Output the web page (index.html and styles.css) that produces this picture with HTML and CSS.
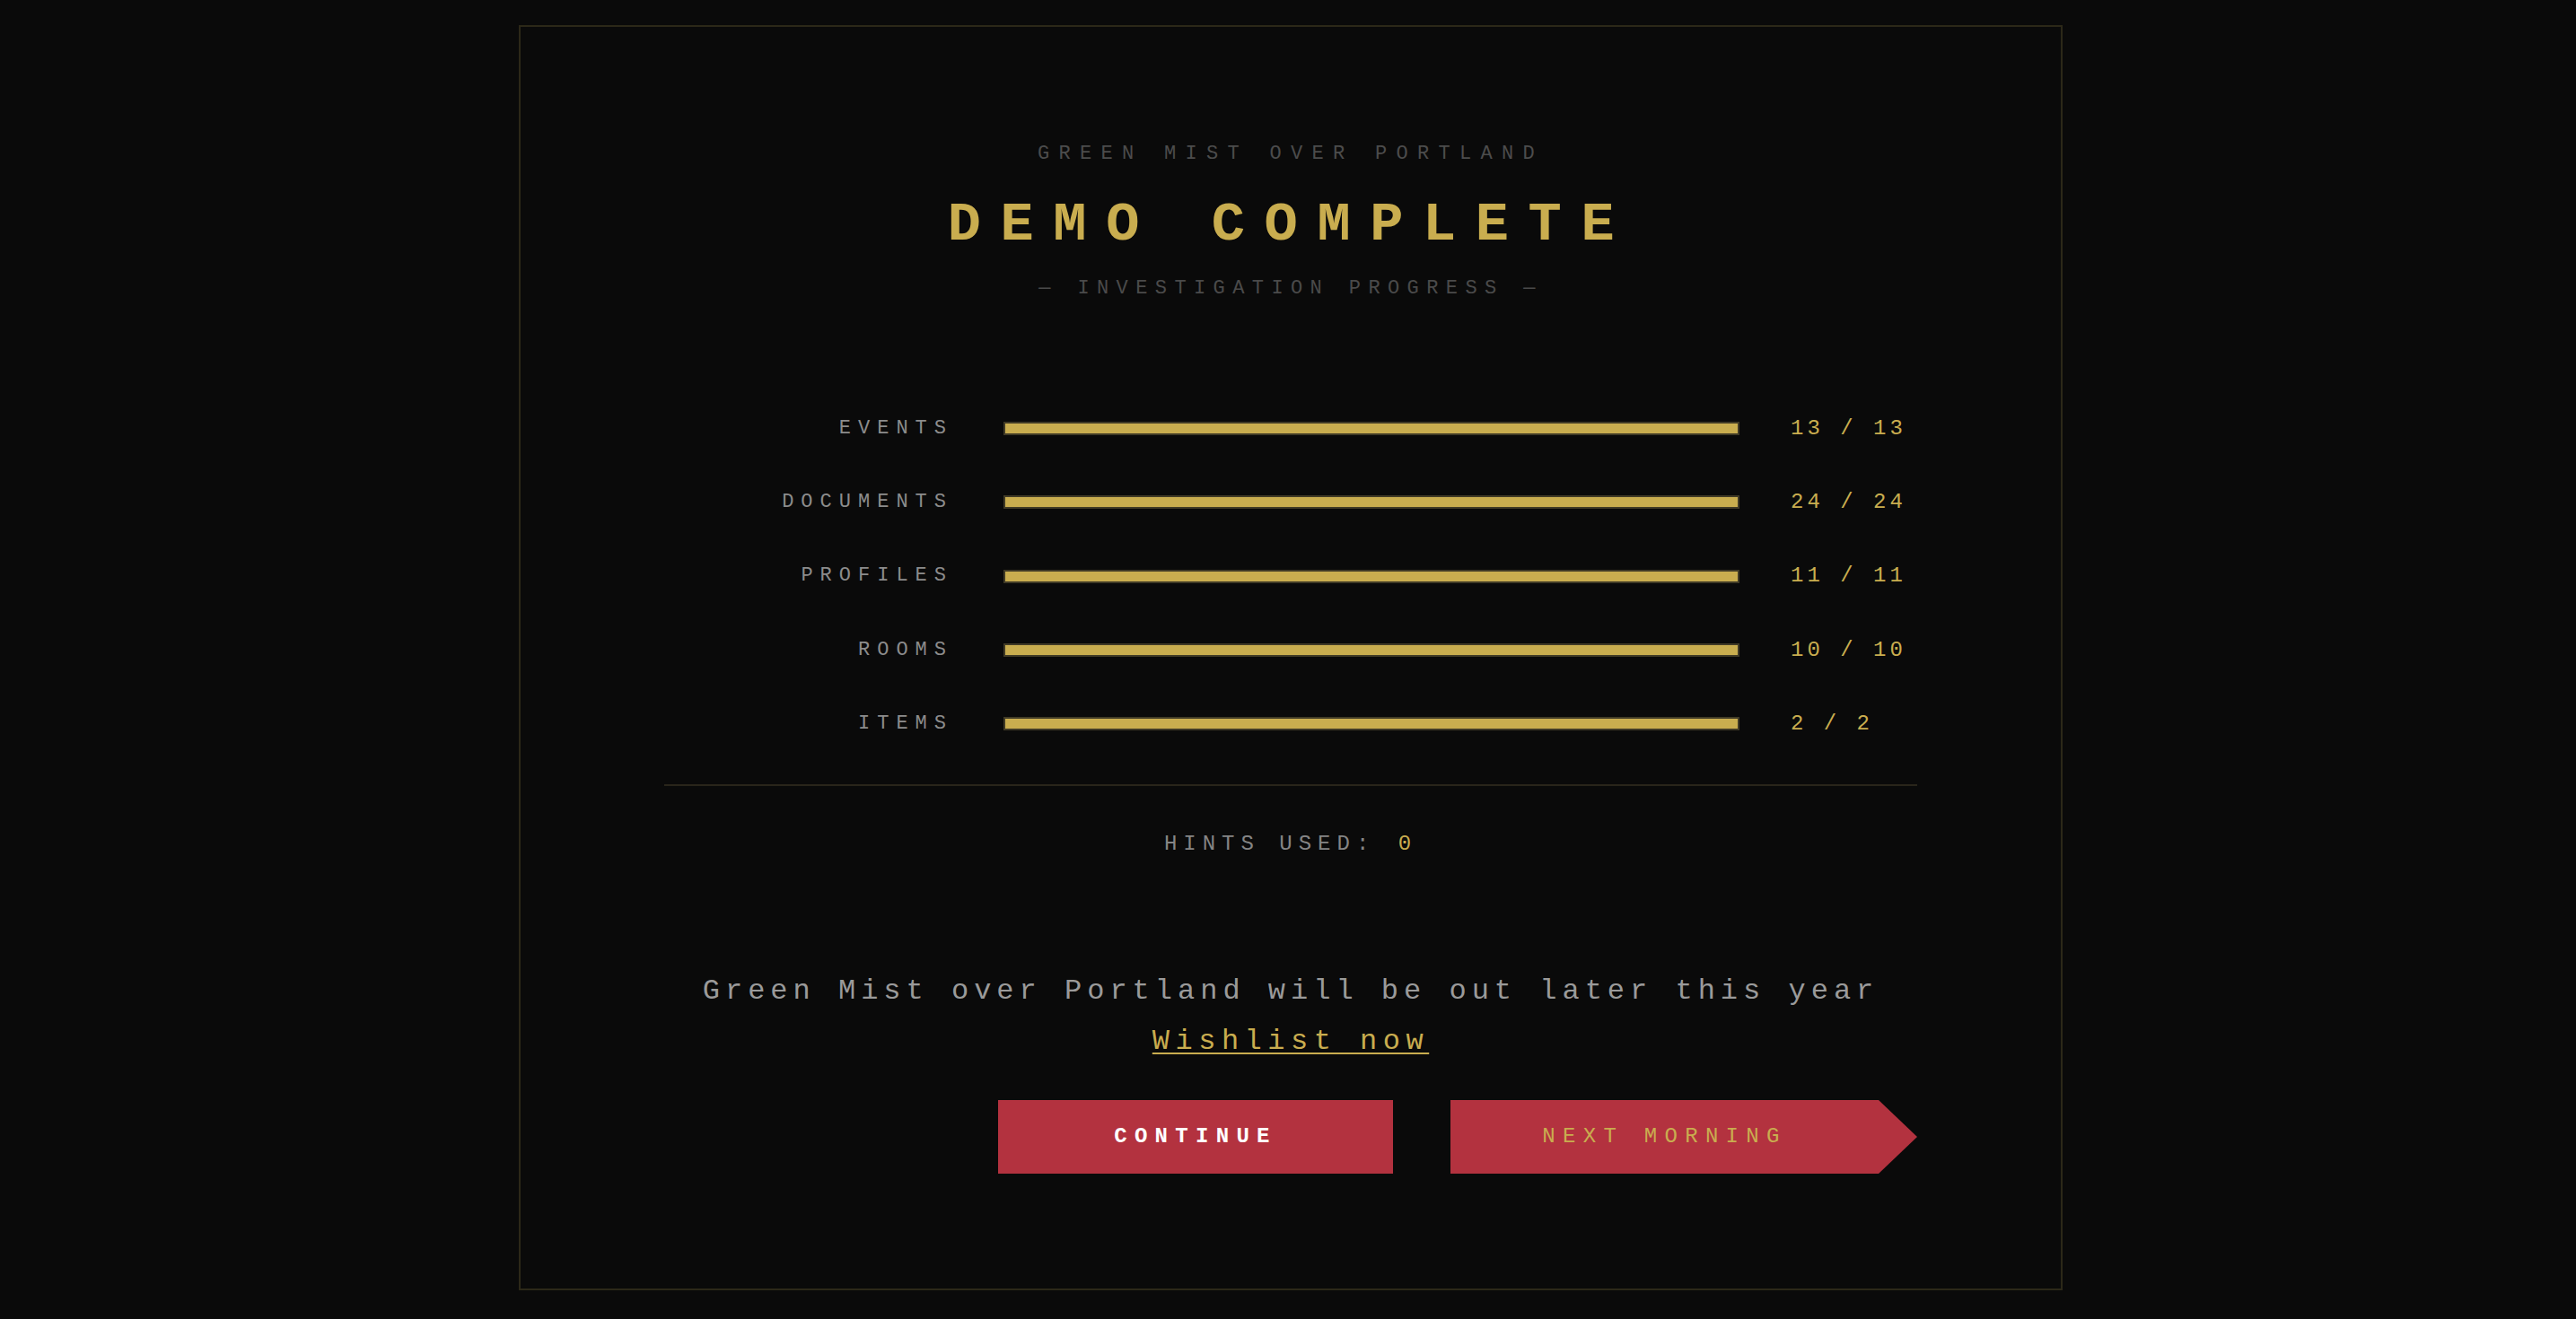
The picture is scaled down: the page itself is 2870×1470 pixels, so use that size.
FILE: index.html
```html
<!DOCTYPE html>
<html lang="en">
<head>
  <meta charset="UTF-8">
  <meta name="viewport" content="width=device-width, initial-scale=1.0">
  <link rel="stylesheet" href="styles.css">
  <title>Demo Complete</title>
</head>
<body>
  <div class="frame">
    <p class="kicker">GREEN MIST OVER PORTLAND</p>
    <h1 class="title">DEMO COMPLETE</h1>
    <p class="subtitle">— INVESTIGATION PROGRESS —</p>

    <div class="inner">
      <div class="stats">
        <div class="stat">
          <span class="stat-label">EVENTS</span>
          <div class="bar"><div class="bar-fill" style="width: 100%"></div></div>
          <span class="stat-value">13 / 13</span>
        </div>
        <div class="stat">
          <span class="stat-label">DOCUMENTS</span>
          <div class="bar"><div class="bar-fill" style="width: 100%"></div></div>
          <span class="stat-value">24 / 24</span>
        </div>
        <div class="stat">
          <span class="stat-label">PROFILES</span>
          <div class="bar"><div class="bar-fill" style="width: 100%"></div></div>
          <span class="stat-value">11 / 11</span>
        </div>
        <div class="stat">
          <span class="stat-label">ROOMS</span>
          <div class="bar"><div class="bar-fill" style="width: 100%"></div></div>
          <span class="stat-value">10 / 10</span>
        </div>
        <div class="stat">
          <span class="stat-label">ITEMS</span>
          <div class="bar"><div class="bar-fill" style="width: 100%"></div></div>
          <span class="stat-value">2 / 2</span>
        </div>
      </div>

      <hr class="divider">

      <p class="hints">HINTS USED: <span class="hints-count">0</span></p>

      <p class="promo">Green Mist over Portland will be out later this year<br><a class="wishlist" href="#">Wishlist now</a></p>

      <div class="actions">
        <button class="btn btn-continue">CONTINUE</button>
        <button class="btn btn-next">NEXT MORNING</button>
      </div>
    </div>
  </div>
</body>
</html>
```

FILE: styles.css
```css
body {
  margin: 0;
  background-color: #0a0a0a;
  font-family: "Liberation Mono", "Courier New", monospace;
}

.frame {
  width: 1720px;
  box-sizing: border-box;
  margin: 28px 0 30px calc(50% - 857px);
  padding: 127px 0 128px;
  border: 2px solid #2c2818;
  text-align: center;
}

.kicker {
  margin: 0;
  font-size: 22px;
  line-height: 30px;
  letter-spacing: 10.3px;
  color: #4c4c4c;
}

.title {
  margin: 23.5px 0 0;
  font-size: 62px;
  line-height: 80px;
  font-weight: bold;
  letter-spacing: 21.6px;
  color: #c9ad4f;
}

.subtitle {
  margin: 16px 0 0;
  font-size: 22px;
  line-height: 30px;
  letter-spacing: 8.4px;
  color: #4a4a4a;
}

.inner {
  width: 1396px;
  margin: 0 auto;
}

/* progress rows */
.stats {
  margin-top: 100px;
}

.stat {
  display: grid;
  grid-template-columns: 322px 820px 1fr;
  column-gap: 56px;
  align-items: center;
  height: 82.3px;
}

.stat-label {
  text-align: right;
  font-size: 22px;
  line-height: 30px;
  letter-spacing: 8px;
  color: #8c8c8c;
}

.bar {
  height: 15px;
  box-sizing: border-box;
  border: 2px solid #403a26;
  background-color: #141310;
}

.bar-fill {
  height: 100%;
  background-color: #c9ad4f;
}

.stat-value {
  text-align: left;
  padding-left: 1px;
  font-size: 24px;
  line-height: 30px;
  letter-spacing: 4px;
  color: #c9ad4f;
}

.divider {
  margin: 26px 0 0;
  border: none;
  border-top: 2px solid #29251a;
}

.hints {
  margin: 50px 0 0;
  font-size: 24px;
  line-height: 30px;
  letter-spacing: 7px;
  color: #858585;
}

.hints-count {
  margin-left: 4px;
  color: #c9ad4f;
}

.promo {
  margin: 121.5px 0 0;
  font-size: 32px;
  line-height: 56px;
  letter-spacing: 6px;
  color: #9a9a9a;
}

.wishlist {
  color: #c9ad4f;
  letter-spacing: 6.5px;
  text-decoration: underline;
  text-decoration-thickness: 2px;
  text-underline-offset: 4px;
}

/* buttons */
.actions {
  display: flex;
  justify-content: flex-end;
  gap: 64px;
  margin-top: 36.5px;
}

.btn {
  height: 82px;
  border: none;
  background-color: #b3323f;
  font-family: "Liberation Mono", "Courier New", monospace;
  font-size: 24px;
  letter-spacing: 8.3px;
  cursor: pointer;
}

.btn-continue {
  width: 440px;
  font-weight: bold;
  color: #ffffff;
}

.btn-next {
  width: 520px;
  padding: 0 43px 0 0;
  color: #c9ad4f;
  clip-path: polygon(0 0, 477px 0, 100% 50%, 477px 100%, 0 100%);
}
```
